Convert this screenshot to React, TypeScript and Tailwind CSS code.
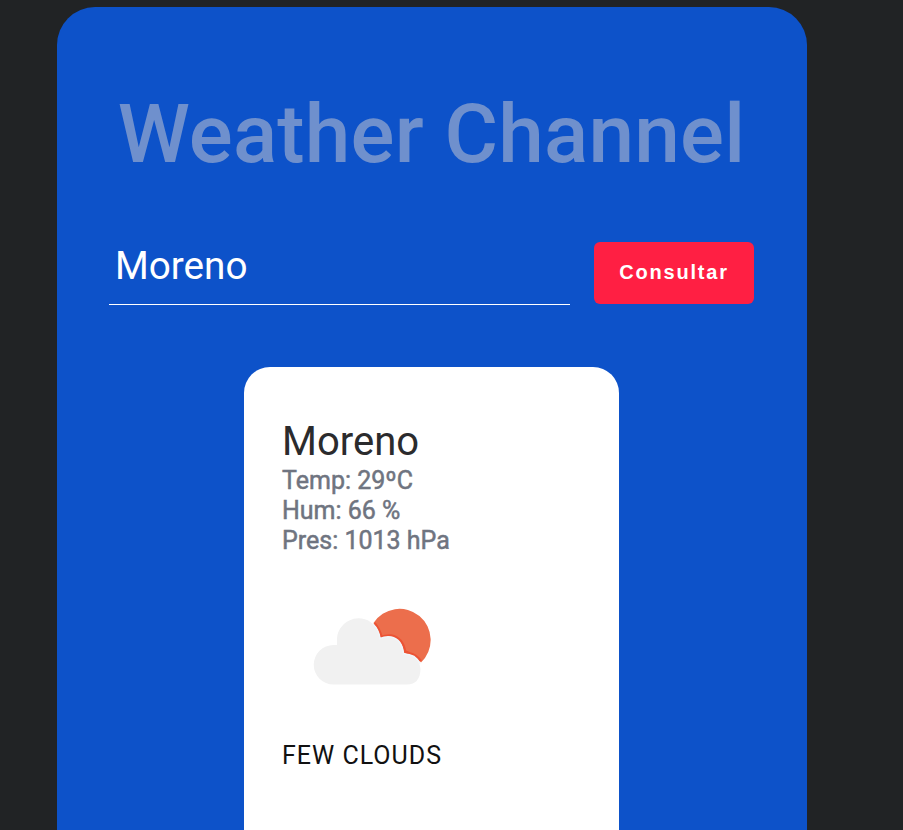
export default function App() {
  return (
    <main className="h-[830px] overflow-hidden bg-[#212325] pl-[57px] pt-[7px] font-[Roboto,sans-serif]">
      <section className="flex h-[900px] w-[750px] flex-col rounded-[38px] bg-[#0d52c9] pl-[52px] pr-[53px] pt-[80px]">
        <h1 className="h-[95px] whitespace-nowrap text-center text-[82px] font-medium leading-[95px] tracking-[0.2px] text-[#6f90cd]">Weather Channel</h1>
        <form className="mt-[60px] flex h-[62px]">
          <input className="h-[63px] w-[461px] border-b border-white bg-transparent pb-[15px] pl-[6px] text-[38.7px] leading-[47px] text-white outline-none" defaultValue="Moreno" />
          <button type="button" className="ml-6 h-[62px] w-[160px] rounded-md bg-[#ff1f43] pb-[2px] font-['Liberation_Sans',sans-serif] text-[20px] font-bold tracking-[1.8px] text-white">Consultar</button>
        </form>
        <article className="ml-[135px] mt-[63px] h-[600px] w-[375px] rounded-[26px] bg-white pl-[38px] pt-[52px]">
          <h2 className="text-[40px] leading-[46px] text-[#2b2b2d]">Moreno</h2>
          <div className="mt-[1px] text-[25px] leading-[30px] text-[#6f7480] [-webkit-text-stroke:0.5px_#6f7480]">
            <p>Temp: 29ºC</p>
            <p>Hum: 66 %</p>
            <p>Pres: 1013 hPa</p>
          </div>
          <svg className="mt-[1px] h-[180px] w-[180px] blur-[0.6px]" viewBox="282 557 180 180">
            <path d="M373.500 623A31.100 31.100 0 1 1 421 662.500Q417 655 410 654.500L404.500 653Q402 638 391 636.500Q386 636 380.500 639Q379 629 373.500 623Z" fill="#ec6e4c" />
            <path d="M374.500 623Q379.500 629 381.500 637Q386 635 391 635.500Q403 638 405 651.500L410 653.500Q416 655 421 661" fill="none" stroke="#ec5334" strokeWidth="2.500" />
            <path d="M333.500 684.500A19.700 19.700 0 0 1 333.500 645H337V641A21.500 21.500 0 0 1 373 624Q379 630 380 638.500Q386 636 391 637Q402 639 403.500 654Q419 654 420.500 669Q420 684.500 407 684.500Z" fill="#f1f1f1" />
            <path d="M373 624Q379 630 380 638.500Q386 636 391 637Q402 639 403.500 654Q416 654 420 664" fill="none" stroke="#f0f6fa" strokeWidth="1.500" />
          </svg>
          <p className="mt-[4px] text-[25px] leading-[30px] tracking-[1px] text-[#111]">FEW CLOUDS</p>
        </article>
      </section>
    </main>
  );
}
